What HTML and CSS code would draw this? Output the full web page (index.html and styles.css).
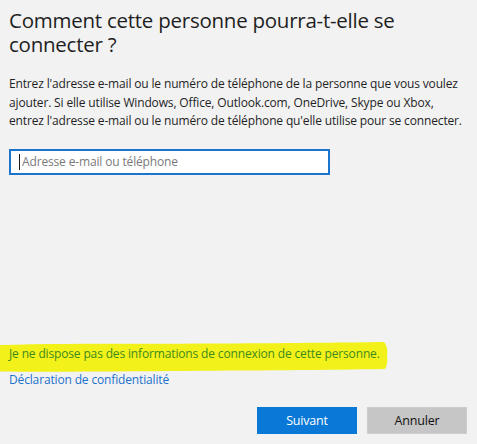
FILE: index.html
```html
<!DOCTYPE html>
<html lang="fr">
<head>
<meta charset="utf-8">
<title>Comment cette personne pourra-t-elle se connecter ?</title>
<link rel="stylesheet" href="styles.css">
</head>
<body>
<main class="page">
  <h1 class="title">Comment cette personne pourra-t-elle se connecter ?</h1>
  <p class="intro">Entrez l'adresse e-mail ou le numéro de téléphone de la personne que vous voulez ajouter. Si elle utilise Windows, Office, Outlook.com, OneDrive, Skype ou Xbox, entrez l'adresse e-mail ou le numéro de téléphone qu'elle utilise pour se connecter.</p>
  <div class="field">
    <input class="field-input" type="text" placeholder="Adresse e-mail ou téléphone">
  </div>
  <div class="footer">
    <div class="highlight">
      <svg class="marker" width="390" height="34" viewBox="0 0 390 34" aria-hidden="true">
        <path d="M0 4 C60 2 140 3 220 2.5 C300 2 350 1.5 384 1 C387 4 388 10 387 15 C388 20 387 25 385 28 C330 29 250 29.5 170 30 C100 30.5 40 31 0 30.5 Z" fill="#f2f21a"/>
      </svg>
      <a class="nodata" href="#">Je ne dispose pas des informations de connexion de cette personne.</a>
    </div>
    <a class="privacy" href="#">Déclaration de confidentialité</a>
    <div class="actions">
      <button class="btn btn-primary" type="button">Suivant</button>
      <button class="btn btn-secondary" type="button">Annuler</button>
    </div>
  </div>
</main>
</body>
</html>
```
FILE: styles.css
```css
html, body {
  margin: 0;
  padding: 0;
  background: #f2f2f2;
}

body {
  font-family: "Open Sans", "Noto Sans", "Liberation Sans", sans-serif;
  color: #1a1a1a;
}

.page {
  box-sizing: border-box;
  height: 444px;
  padding: 8px 9px 10px 9px;
  display: flex;
  flex-direction: column;
}

.title {
  margin: 0;
  width: 400px;
  font-size: 20.5px;
  font-weight: 400;
  line-height: 24px;
  letter-spacing: -0.25px;
  color: #1f1f1f;
}

.intro {
  margin: 19px 0 0 0;
  font-size: 12px;
  line-height: 18.5px;
  letter-spacing: -0.15px;
  color: #1f1f1f;
}

.field {
  margin-top: 18px;
  position: relative;
  width: 321px;
}

.field::before {
  content: "";
  position: absolute;
  left: 10px;
  top: 5px;
  width: 1px;
  height: 16px;
  background: #1a1a1a;
}

.field-input {
  box-sizing: border-box;
  display: block;
  width: 321px;
  height: 26px;
  margin: 0;
  padding: 0 0 0 11px;
  border: 2px solid #1c74cf;
  background: #ffffff;
  font-family: inherit;
  font-size: 12px;
  letter-spacing: -0.15px;
  color: #1a1a1a;
  outline: none;
}

.field-input::placeholder {
  color: #7a7a7a;
  opacity: 1;
}

.footer {
  margin-top: auto;
  display: flex;
  flex-direction: column;
  align-items: flex-start;
}

.highlight {
  position: relative;
  margin-left: -9px;
  padding-left: 9px;
}

.marker {
  position: absolute;
  left: 0;
  top: -4px;
  display: block;
}

.nodata {
  position: relative;
  display: block;
  font-size: 12px;
  line-height: 18px;
  letter-spacing: -0.15px;
  color: #3e8a1e;
  text-decoration: none;
}

.privacy {
  margin-top: 8px;
  font-size: 12px;
  line-height: 18px;
  letter-spacing: -0.15px;
  color: #1d73cc;
  text-decoration: none;
}

.actions {
  align-self: flex-end;
  margin-top: 18px;
  margin-right: 1px;
  display: flex;
  gap: 10px;
}

.btn {
  box-sizing: border-box;
  width: 100px;
  height: 27px;
  margin: 0;
  padding: 0;
  border: 0;
  font-family: inherit;
  font-size: 12.5px;
  letter-spacing: -0.2px;
}

.btn-primary {
  background: #0a78d7;
  color: #ffffff;
}

.btn-secondary {
  background: #c6c6c6;
  border: 1px solid #cdcdcd;
  color: #111111;
}
```
